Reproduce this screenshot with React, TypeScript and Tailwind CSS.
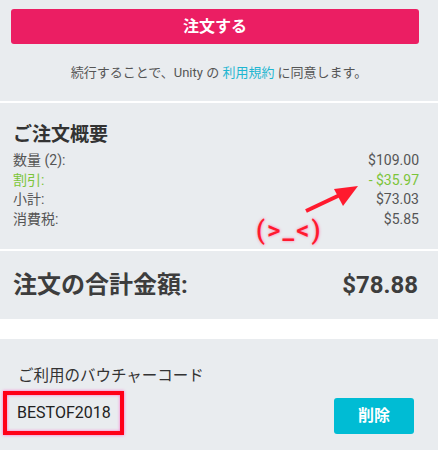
const font = { fontFamily: "Roboto, 'Noto Sans CJK JP', sans-serif" };

function Row({ label, value, green }: { label: string; value: string; green?: boolean }) {
  return (
    <div className={`flex justify-between h-[19.5px] items-center text-[14px] ${green ? "text-[#7cc43a]" : "text-[#555]"}`}>
      <span>{label}</span>
      <span>{value}</span>
    </div>
  );
}

export default function App() {
  return (
    <div className="w-[438px] h-[450px] bg-[#e9ecef] overflow-hidden" style={font}>
      <div className="px-[11px] pt-[9px] h-[103px] border-b-2 border-white">
        <button className="w-[408px] h-[35px] bg-[#eb1e63] rounded-[3px] text-white font-bold text-[16px]">
          注文する
        </button>
        <p className="mt-[19px] text-center text-[13px] text-[#555]">
          続行することで、Unity の <span className="text-[#1fb6d1]">利用規約</span> に同意します。
        </p>
      </div>

      <div className="relative px-[13px] pt-[19px] h-[148px] border-b-2 border-white">
        <h2 className="text-[19px] font-bold text-[#333] leading-[26px]">ご注文概要</h2>
        <div className="pr-[6px] mt-[3px]">
          <Row label="数量 (2):" value="$109.00" />
          <Row label="割引:" value="- $35.97" green />
          <Row label="小計:" value="$73.03" />
          <Row label="消費税:" value="$5.85" />
        </div>
        <svg className="absolute left-[300px] top-[78px]" width="64" height="36" viewBox="0 0 64 36">
          <line x1="6" y1="30" x2="42" y2="13" stroke="#ff1a2e" strokeWidth="4" />
          <polygon points="58,5 34,8 43,25" fill="#ff1a2e" />
        </svg>
        <div
          className="absolute left-[256px] top-[112px] text-[26px] font-medium text-[#ff1a2e] tracking-[2px] leading-[30px]"
          style={{ textShadow: "0 0 3px #f7a" }}
        >
          (&gt;_&lt;)
        </div>
      </div>

      <div className="flex justify-between items-center px-[13px] pr-[20px] h-[68px] text-[#3d3d3d] font-bold text-[24px]">
        <span>注文の合計金額:</span>
        <span>$78.88</span>
      </div>

      <div className="h-[20px] bg-white" />

      <div className="pt-[26px] pl-[18px] pr-[24px]">
        <p className="text-[15.5px] text-[#333]">ご利用のバウチャーコード</p>
        <div className="mt-[3px] flex justify-between items-center">
          <div
            className="ml-[-15px] w-[121px] h-[44px] border-4 border-[#ff0018] flex items-center pl-[10px] text-[16px] text-[#222]"
            style={{ boxShadow: "0 0 3px #f6c, inset 0 0 3px #f6c" }}
          >
            BESTOF2018
          </div>
          <button className="w-[80px] h-[36px] mt-[6px] bg-[#00bcd4] rounded-[3px] text-white text-[16px] font-bold">
            削除
          </button>
        </div>
      </div>
    </div>
  );
}
